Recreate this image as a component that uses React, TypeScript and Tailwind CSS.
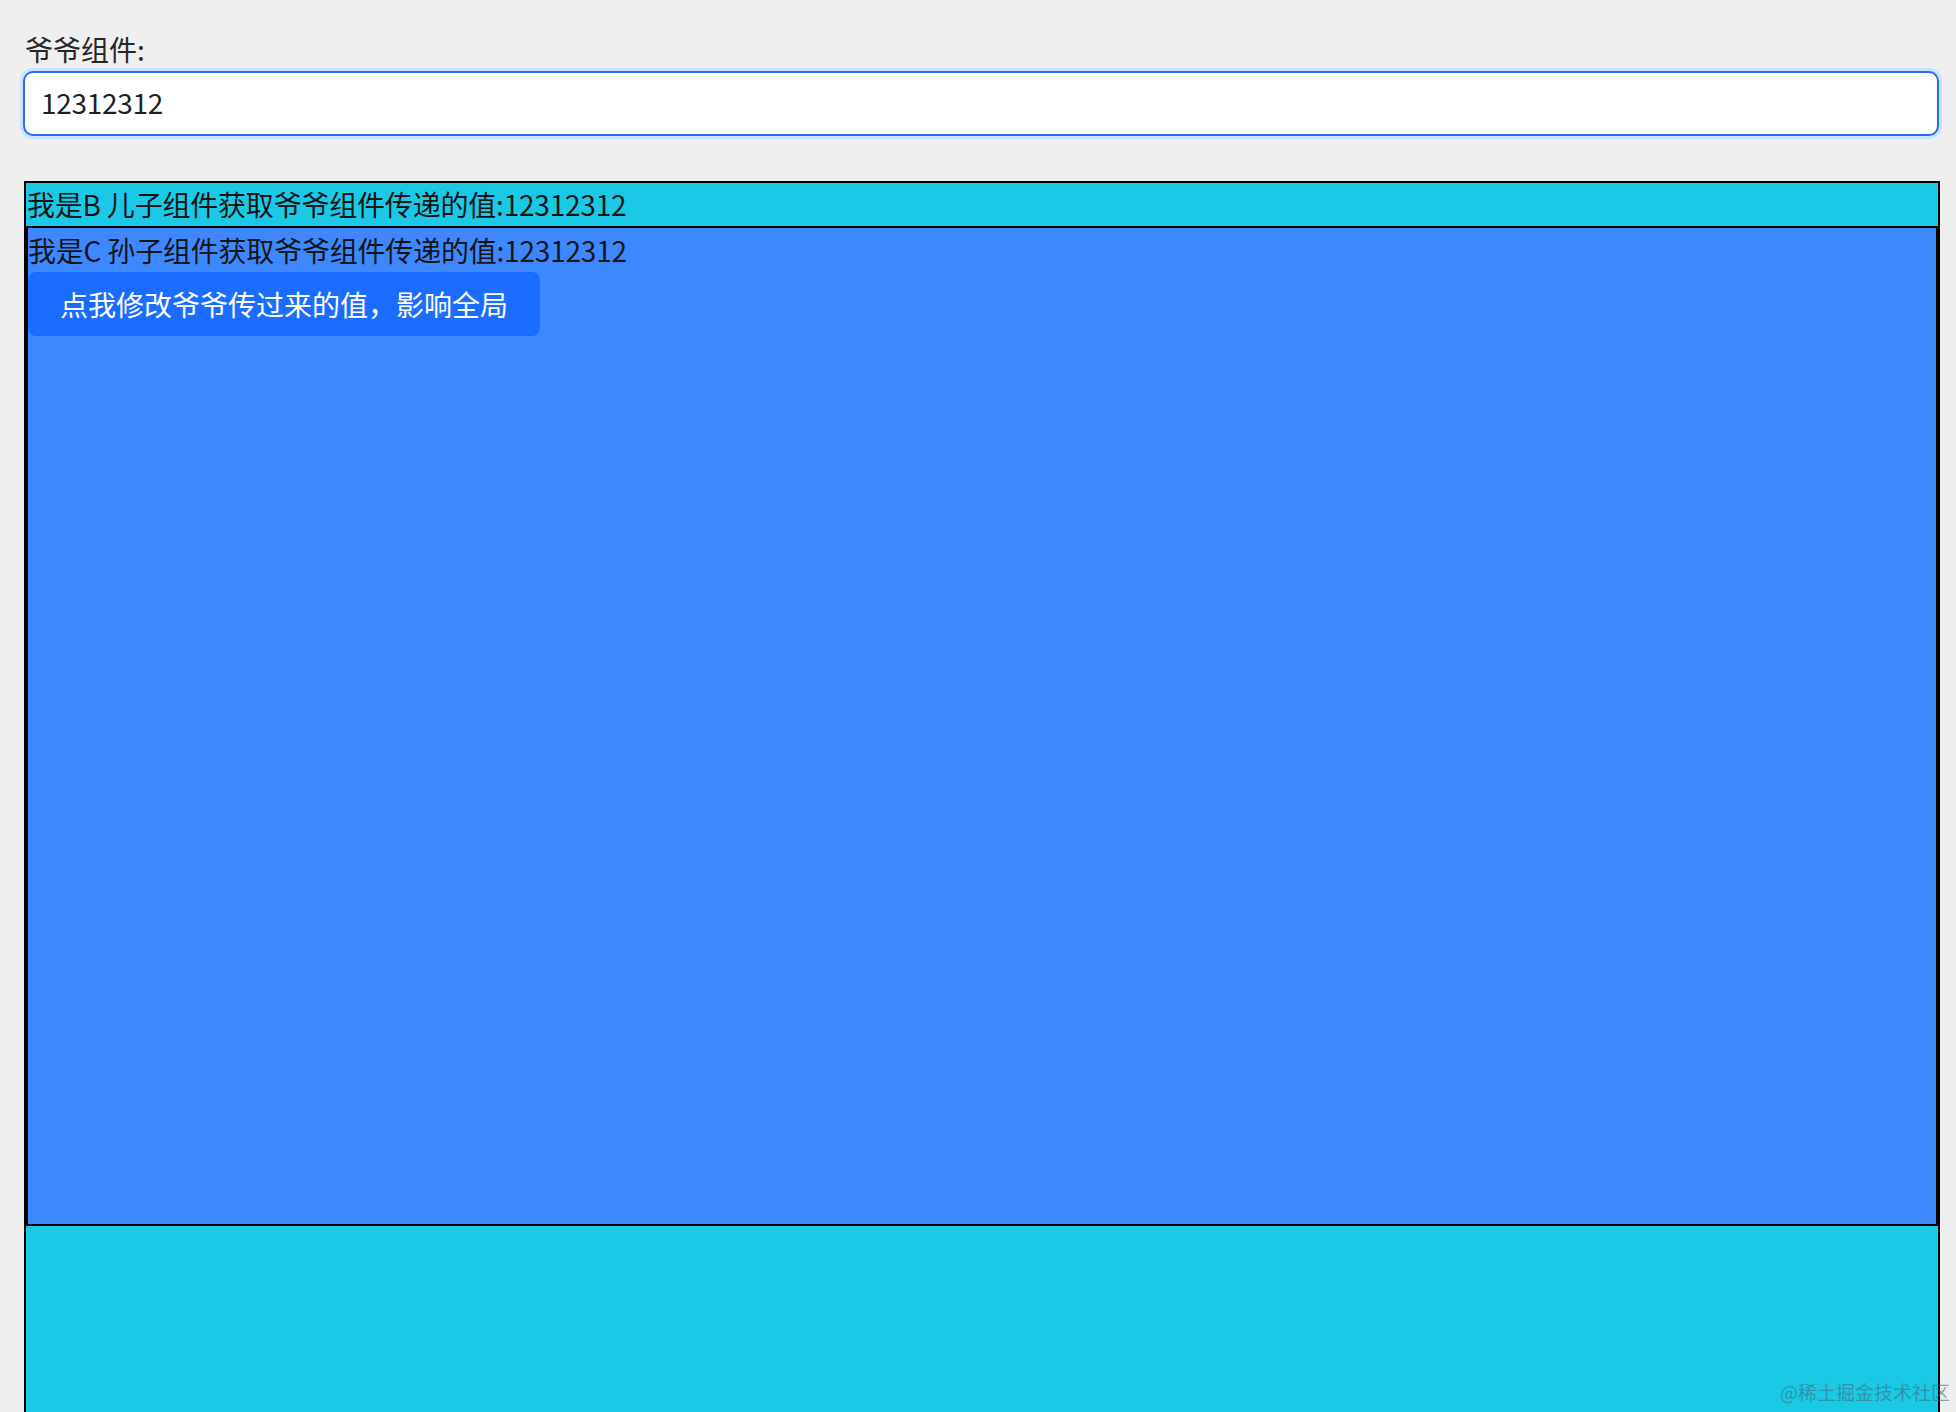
import React from "react";

export default function App() {
  const font = { fontFamily: '"Noto Sans CJK SC", "Noto Sans", sans-serif' };
  return (
    <div className="relative h-[1412px] w-[1956px] overflow-hidden bg-[#efefef]" style={font}>
      <div className="pl-[23px] pr-[17px] pt-[27px]">
        <div className="pl-[2px] text-[28px] leading-[44px] text-[#262626]">爷爷组件:</div>
        <input
          defaultValue="12312312"
          className="box-border block h-[65px] w-[1916px] rounded-[10px] border-2 border-[#2470ea] bg-white pb-[4px] pl-[16px] text-[28px] tracking-[-0.3px] text-[#1f1f1f] shadow-[0_0_0_3px_#cde0fd] outline-none"
          style={font}
        />
      </div>
      <div className="ml-[24px] mt-[45px] h-[1300px] w-[1916px] border-2 border-black bg-[#1bc9e6]">
        <div className="pl-[1px] text-[28px] leading-[43px] tracking-[-0.2px] text-[#151515]">
          我是B 儿子组件获取爷爷组件传递的值:12312312
        </div>
        <div className="h-[1000px] w-full border-2 border-black bg-[#3e88ff]">
          <div className="text-[28px] leading-[44px] tracking-[-0.2px] text-[#151515]">
            我是C 孙子组件获取爷爷组件传递的值:12312312
          </div>
          <button
            className="flex h-[64px] w-[512px] items-center justify-center rounded-[8px] bg-[#1b6dff] text-[28px] text-white"
            style={font}
          >
            点我修改爷爷传过来的值，影响全局
          </button>
        </div>
      </div>
      <div className="absolute bottom-[8px] right-[6px] text-[19px] leading-[24px] text-[#3d6f80]/60" style={{ fontFamily: '"Noto Sans CJK SC", serif' }}>
        @稀土掘金技术社区
      </div>
    </div>
  );
}
